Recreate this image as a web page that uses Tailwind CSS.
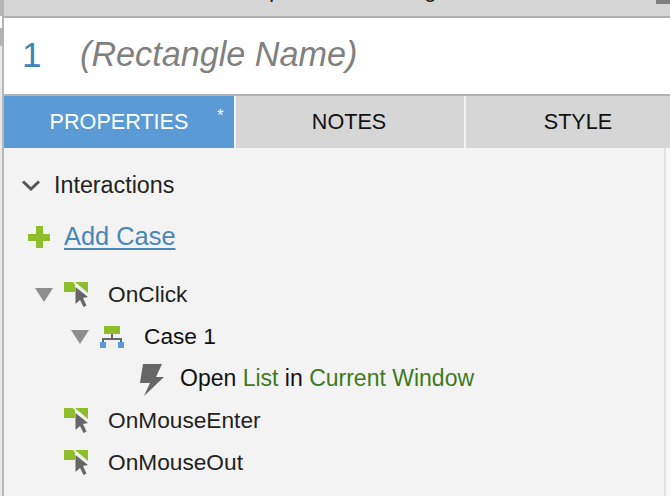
<!DOCTYPE html>
<html lang="en">

<head>
    <meta charset="UTF-8">
    <title>Rectangle Properties</title>
    <script src="https://cdn.jsdelivr.net/npm/@tailwindcss/browser@4"></script>
</head>

<body class="bg-[#f3f3f3] font-['Liberation_Sans',Arial,sans-serif] overflow-hidden">

    <div class="w-[670px] h-[496px] flex overflow-hidden">
        <!-- left edge of the window -->
        <div class="w-[4px] shrink-0 flex flex-col">
            <div class="h-[16px] bg-[#b4b4b4]"></div>
            <div class="h-[12px] bg-white border-r-2 border-[#b4b4b4]"></div>
            <div class="h-[18px] bg-[#b4b4b4]"></div>
            <div class="flex-1 bg-[#e8e8e8] border-r-2 border-[#b8b8b8]"></div>
        </div>

        <div class="flex-1 min-w-0 flex flex-col">
            <div class="h-[18px] shrink-0 bg-[#d6d6d6] border-b-2 border-[#b0b0b0] relative overflow-hidden">
                <span class="absolute left-[265px] top-[-22px] text-[23px] leading-none text-[#222]">p</span>
                <span class="absolute left-[420px] top-[-22px] text-[23px] leading-none text-[#222]">g</span>
                <div class="absolute right-0 top-0 w-[14px] h-[4px] bg-[#808080]"></div>
            </div>

            <div class="h-[76px] shrink-0 bg-white flex items-center pb-[2px]">
                <span class="w-[76px] pl-[18px] text-[35px] text-[#3f83b9]">1</span>
                <span class="text-[34.200px] italic text-[#808080]">(Rectangle Name)</span>
            </div>

            <div class="h-[54px] shrink-0 flex border-t-2 border-[#b4b4b4] bg-[#f3f3f3]">
                <div class="w-[230px] pt-[1px] bg-[#5b9bd5] text-white text-[21.600px] relative flex items-center justify-center">
                    PROPERTIES
                    <span class="absolute left-[213px] top-[11px] text-[17px] leading-none">*</span>
                </div>
                <div class="w-[228px] ml-[2px] pt-[1px] pr-[2px] bg-[#d6d6d6] text-[#111] text-[21.600px] flex items-center justify-center">NOTES</div>
                <div class="flex-1 ml-[2px] pt-[1px] pl-[20px] bg-[#d6d6d6] text-[#111] text-[21.600px] flex items-center justify-center">STYLE</div>
            </div>

            <div class="flex-1 flex min-h-0">
                <div class="flex-1 pt-[25px] text-[#222] text-[22.700px]">
                    <div class="flex items-center h-[24px] pl-[18px]">
                        <svg class="w-[18px] h-[11px]" viewBox="0 0 18 11"><path d="M1 1.500 L9 9 L17 1.500" fill="none" stroke="#555" stroke-width="3"/></svg>
                        <span class="ml-[14px] text-[23.300px]">Interactions</span>
                    </div>

                    <div class="flex items-center h-[28px] mt-[25px] pl-[24px]">
                        <svg class="w-[22px] h-[22px] mt-[2px]" viewBox="0 0 22 22"><path d="M8 0 H15 V8 H22 V15 H15 V22 H8 V15 H0 V8 H8 Z" fill="#8fbe2d"/></svg>
                        <span class="ml-[14px] text-[25.400px] text-[#4a86b8] underline decoration-2 underline-offset-[3px]">Add Case</span>
                    </div>

                    <div class="flex items-center h-[42px] mt-[23px] pl-[31px]">
                        <svg class="w-[18px] h-[14px] mt-[2px]" viewBox="0 0 18 14"><path d="M0 0 H18 L9 14 Z" fill="#8f8f8f"/></svg>
                        <svg class="ml-[11px] w-[24px] h-[26px] mt-[2px]"><use href="#cursor-icon"/></svg>
                        <span class="ml-[20px]">OnClick</span>
                    </div>

                    <div class="flex items-center h-[42px] pl-[67px]">
                        <svg class="w-[18px] h-[14px] mt-[2px]" viewBox="0 0 18 14"><path d="M0 0 H18 L9 14 Z" fill="#8f8f8f"/></svg>
                        <svg class="ml-[11px] w-[24px] h-[22px] mt-[2px]" viewBox="0 0 24 22">
                            <rect x="4" y="0" width="16" height="8" fill="#8fbe2d"/>
                            <path d="M12 8 V13 M3 16 V13 H21 V16" fill="none" stroke="#666" stroke-width="2"/>
                            <rect x="0" y="16" width="6" height="6" fill="#5b9bd5"/>
                            <rect x="18" y="16" width="6" height="6" fill="#5b9bd5"/>
                        </svg>
                        <span class="ml-[20px] text-[#111]">Case 1</span>
                    </div>

                    <div class="flex items-center h-[42px] pl-[136px]">
                        <svg class="w-[24px] h-[32px] mt-[4px]" viewBox="0 0 24 32"><path d="M3 0 H22 L16 13 H24 L4 32 L10 19 H0 Z" fill="#666"/></svg>
                        <span class="ml-[16px] text-[23px] text-[#111]">Open <span class="text-[#3f7a1c]">List</span> in <span class="text-[#3f7a1c]">Current Window</span></span>
                    </div>

                    <div class="flex items-center h-[42px] pl-[60px]">
                        <svg class="w-[24px] h-[26px] mt-[2px]"><use href="#cursor-icon"/></svg>
                        <span class="ml-[20px]">OnMouseEnter</span>
                    </div>

                    <div class="flex items-center h-[42px] pl-[60px]">
                        <svg class="w-[24px] h-[26px] mt-[2px]"><use href="#cursor-icon"/></svg>
                        <span class="ml-[20px]">OnMouseOut</span>
                    </div>
                </div>

                <!-- right edge -->
                <div class="w-[2px] shrink-0 bg-[#e2e2e2]"></div>
                <div class="w-[4px] shrink-0 bg-[#f9f9f9]"></div>
            </div>
        </div>
    </div>

    <svg class="hidden">
        <symbol id="cursor-icon" viewBox="0 0 24 26">
            <path d="M0 0 H9 L11 2.500 V10 H0 Z" fill="#8fbe2d"/>
            <path d="M11 0 H24 V11 Z" fill="#8fbe2d"/>
            <path d="M11.500 5 L24 15 L19 16 L22.500 23.500 L19.500 25 L16 18 L11.500 22 Z" fill="#666"/>
        </symbol>
    </svg>

</body>

</html>
